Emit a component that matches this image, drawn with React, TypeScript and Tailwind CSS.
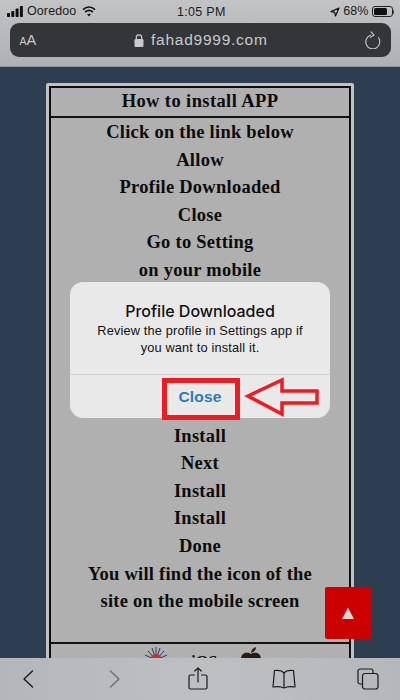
import React from "react";

const topLines = ["Click on the link below", "Allow", "Profile Downloaded", "Close", "Go to Setting", "on your mobile"];
const bottomLines = ["Install", "Next", "Install", "Install", "Done", "You will find the icon of the", "site on the mobile screen"];

function Line({ text }: { text: string }) {
  return <div className="h-[27.6px] leading-[27.6px] whitespace-nowrap">{text}</div>;
}

export default function App() {
  return (
    <div className="relative w-[400px] h-[700px] overflow-hidden flex flex-col bg-[#2c3e50] font-['Liberation_Sans',sans-serif]">
      {/* Safari top bar */}
      <header className="h-[67px] shrink-0 flex flex-col bg-gradient-to-b from-[#c2c3c5] to-[#aeb0b3] border-b border-[#8e949a]">
        <div className="relative h-[22px] flex items-center justify-between pl-[7px] pr-[6px] pt-[1px] text-[12.5px] tracking-[0.1px] text-[#1c1c1e]">
          <div className="flex items-center gap-[4px]">
            <svg width="16" height="11" viewBox="0 0 16 11" fill="#111">
              <rect x="0" y="7" width="3" height="4" rx="0.7" />
              <rect x="4.3" y="5" width="3" height="6" rx="0.7" />
              <rect x="8.6" y="2.5" width="3" height="8.5" rx="0.7" />
              <rect x="12.9" y="0" width="3" height="11" rx="0.7" />
            </svg>
            <span>Ooredoo</span>
            <svg className="ml-[2px]" width="14" height="11" viewBox="0 0 14 11" fill="none" stroke="#111" strokeWidth="1.7">
              <path d="M1 3.6C4.6.4 9.4.4 13 3.6" />
              <path d="M3.2 6C5.6 4 8.4 4 10.8 6" />
              <path d="M7 10.6 5 8.3c1.2-.9 2.8-.9 4 0Z" fill="#111" stroke="none" />
            </svg>
          </div>
          <span className="absolute left-[177px] top-[3px] text-[12.5px] tracking-[0.3px]">1:05 PM</span>
          <div className="flex items-center gap-[3px]">
            <svg width="10" height="10" viewBox="0 0 10 10" fill="none" stroke="#111" strokeWidth="1.2">
              <path d="M9 1 1 4.6l3.7.7.8 3.7Z" strokeLinejoin="round" />
            </svg>
            <span>68%</span>
            <div className="flex items-center">
              <div className="w-[21px] h-[10.5px] rounded-[3px] border border-[#222] p-[1px]">
                <div className="h-full w-[13.5px] rounded-[1.5px] bg-[#111]" />
              </div>
              <div className="w-[1.5px] h-[4px] bg-[#444] rounded-r-sm" />
            </div>
          </div>
        </div>
        <div className="mx-[9.5px] mt-[1px] h-[34px] rounded-[9px] bg-[#333538] flex items-center justify-between pl-[10px] pr-[9px] text-[#c9cacc]">
          <div className="flex items-baseline leading-none">
            <span className="text-[10.5px]">A</span>
            <span className="text-[14.5px]">A</span>
          </div>
          <div className="flex items-center gap-[7px]">
            <svg width="10" height="13" viewBox="0 0 10 13" fill="#c9cacc">
              <rect x="0.5" y="5" width="9" height="8" rx="1.2" />
              <path d="M2.3 5.5V3.6a2.7 2.7 0 0 1 5.4 0v1.9" fill="none" stroke="#c9cacc" strokeWidth="1.2" />
            </svg>
            <span className="text-[15.5px] tracking-[0.75px]">fahad9999.com</span>
          </div>
          <svg width="16" height="18" viewBox="0 0 16 18" fill="none" stroke="#c9cacc" strokeWidth="1.1" strokeLinecap="round" strokeLinejoin="round">
            <path d="M5.6 4.2A7 7 0 1 0 13.5 6.8" />
            <path d="M6 .8 9 4 5.4 6.4" />
          </svg>
        </div>
      </header>

      {/* Page */}
      <main className="flex-1 min-h-0 flex justify-center pt-[16px]">
        <div className="w-[308px] h-[700px] shrink-0 border-[3px] border-[#c0c2c4] rounded-t-[2px] bg-[#b0b0b0]">
          <div className="border-2 border-[#0d0d0d] h-full font-['Liberation_Serif',serif] font-bold text-[#0c0c0c] text-center text-[18.5px] tracking-[0.25px]">
            <div className="h-[30px] leading-[27px] text-[18.5px] tracking-[0.4px] border-b-2 border-[#111]">How to install APP</div>
            <div className="pt-[1px]">
              {topLines.map((t, i) => <Line key={i} text={t} />)}
            </div>
            <div className="h-[138px]" />
            {bottomLines.map((t, i) => <Line key={i} text={t} />)}
            <div className="h-[28px] border-b-2 border-[#111]" />
            <div className="flex justify-center items-start gap-[22px] pt-[3px] pl-[5px] h-[30px]">
              <svg width="26" height="26" viewBox="0 0 26 26">
                <g stroke="#27406b" strokeWidth="1">
                  <path d="M13 13 2 8M13 13 5 4M13 13 9 1M13 13V0M13 13 17 1M13 13 21 4M13 13 24 8" />
                </g>
                <circle cx="13" cy="13" r="6" fill="#c9302c" />
              </svg>
              <span className="text-[16px] leading-[12px] mt-[9px]">iOS</span>
              <svg width="22" height="26" viewBox="0 0 22 26" fill="#2a1c14">
                <path d="M11 7C8 4.500 1 5 1 12c0 6 4 11 7 11 1 0 2-1 3-1s2 1 3 1c3 0 7-5 7-11 0-7-7-7.500-10-5Z" />
                <path d="M11 6c0-3 2-5 5-6 0 3-2 5-5 6Z" />
              </svg>
            </div>
          </div>
        </div>
      </main>

      {/* Safari bottom toolbar */}
      <nav className="absolute left-0 right-0 bottom-0 h-[42px] bg-gradient-to-r from-[#b4b6b9] via-[#bdbfc2] to-[#b5b7ba] flex items-center pl-[22px]">
        <svg width="12" height="20" viewBox="0 0 12 20" fill="none" stroke="#1a1a1a" strokeWidth="1.4" strokeLinecap="round" strokeLinejoin="round"><path d="M10.500 2 2 10l8.500 8" /></svg>
        <svg className="ml-[75px]" width="12" height="20" viewBox="0 0 12 20" fill="none" stroke="#6d6f72" strokeWidth="1.4" strokeLinecap="round" strokeLinejoin="round"><path d="M1.500 2 10 10l-8.500 8" /></svg>
        <svg className="ml-[67px]" width="20" height="24" viewBox="0 0 20 24" fill="none" stroke="#1a1a1a" strokeWidth="1.2" strokeLinecap="round" strokeLinejoin="round">
          <path d="M6.500 8H2.500a1.500 1.500 0 0 0-1.500 1.500v11A1.500 1.500 0 0 0 2.500 22h15a1.500 1.500 0 0 0 1.500-1.500v-11A1.500 1.500 0 0 0 17.500 8h-4" />
          <path d="M10 15V1M6.800 4 10 1l3.200 3" />
        </svg>
        <svg className="ml-[64px]" width="24" height="20" viewBox="0 0 24 20" fill="none" stroke="#1a1a1a" strokeWidth="1.2" strokeLinejoin="round">
          <path d="M12 4C10 1.500 6 1 2.500 1.500L1 18c4-.8 8-.5 11 1 3-1.500 7-1.800 11-1L21.500 1.500C18 1 14 1.500 12 4Z" />
          <path d="M12 4v15" />
        </svg>
        <svg className="ml-[61px]" width="22" height="22" viewBox="0 0 22 22" fill="none" stroke="#1a1a1a" strokeWidth="1.2">
          <path d="M5 16H3a2 2 0 0 1-2-2V3a2 2 0 0 1 2-2h11a2 2 0 0 1 2 2v2" />
          <rect x="5.500" y="5.500" width="15.500" height="15.500" rx="2.500" />
        </svg>
      </nav>

      {/* Scroll-to-top button */}
      <div className="absolute left-[325px] top-[587px] w-[46px] h-[52px] rounded-[2px] bg-[#cc0000] flex items-center justify-center">
        <svg width="12" height="12" viewBox="0 0 12 12" fill="#e4d5d5"><path d="M6 0.500 12 12H0Z" /></svg>
      </div>

      {/* Alert */}
      <div className="absolute left-[70px] top-[282px] w-[260px] h-[136px] rounded-[13px] bg-[#e9e9e9] flex flex-col text-center text-[#111]">
        <div className="h-[93px] border-b border-[#d0d0d0] pt-[19px]">
          <div className="text-[16px] leading-[20px] font-['Inter',sans-serif] font-medium">Profile Downloaded</div>
          <div className="mt-[1px] text-[12.8px] leading-[17px] tracking-[0.15px]">
            <div>Review the profile in Settings app if</div>
            <div>you want to install it.</div>
          </div>
        </div>
        <div className="flex-1 flex items-center justify-center text-[15.5px] font-semibold text-[#2a7ac0] tracking-[0.2px]">Close</div>
      </div>

      {/* Red annotation */}
      <div className="absolute left-[162px] top-[378px] w-[78px] h-[42px] border-[5px] border-[#ec1c24]" />
      <svg className="absolute left-[244px] top-[376px]" width="76" height="42" viewBox="0 0 76 42" fill="none" stroke="#ec1c24" strokeWidth="3.500">
        <path d="M4 20 38 4v11h35v12H38v11Z" />
      </svg>
    </div>
  );
}
